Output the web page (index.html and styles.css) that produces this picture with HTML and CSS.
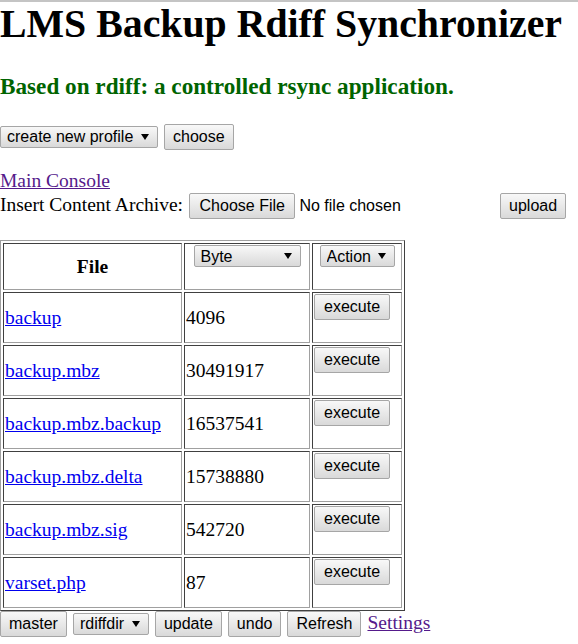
FILE: index.html
```html
<!DOCTYPE html>
<html lang="en">

<head>
    <meta charset="UTF-8">
    <meta name="viewport" content="width=device-width, initial-scale=1.0">
    <title>LMS Backup Rdiff Synchronizer</title>
    <link rel="stylesheet" href="styles.css">
</head>

<body>
    <h1>LMS Backup Rdiff Synchronizer</h1>
    <h3 class="tagline">Based on rdiff: a controlled rsync application.</h3>

    <form class="toolbar profile-bar">
        <span class="picker">
            <select class="select-profile" name="profile">
                <option>create new profile</option>
            </select>
        </span>
        <button type="button">choose</button>
    </form>

    <div class="console-link"><a href="#" class="seen">Main Console</a></div>

    <form class="toolbar upload-bar">
        <span>Insert Content Archive:</span>
        <input type="file" name="archive" class="archive-input">
        <button type="button">upload</button>
    </form>

    <table class="files">
        <tr>
            <th class="col-file">File</th>
            <th class="col-size">
                <form class="cell-form head-form">
                    <span class="picker">
                        <select class="select-unit" name="unit">
                            <option>Byte</option>
                        </select>
                    </span>
                </form>
            </th>
            <th class="col-action">
                <form class="cell-form head-form">
                    <span class="picker">
                        <select class="select-action" name="action">
                            <option>Action</option>
                        </select>
                    </span>
                </form>
            </th>
        </tr>
        <tr>
            <td><a href="#">backup</a></td>
            <td>4096</td>
            <td><form class="cell-form"><button type="button" class="run">execute</button></form></td>
        </tr>
        <tr>
            <td><a href="#">backup.mbz</a></td>
            <td>30491917</td>
            <td><form class="cell-form"><button type="button" class="run">execute</button></form></td>
        </tr>
        <tr>
            <td><a href="#">backup.mbz.backup</a></td>
            <td>16537541</td>
            <td><form class="cell-form"><button type="button" class="run">execute</button></form></td>
        </tr>
        <tr>
            <td><a href="#">backup.mbz.delta</a></td>
            <td>15738880</td>
            <td><form class="cell-form"><button type="button" class="run">execute</button></form></td>
        </tr>
        <tr>
            <td><a href="#">backup.mbz.sig</a></td>
            <td>542720</td>
            <td><form class="cell-form"><button type="button" class="run">execute</button></form></td>
        </tr>
        <tr>
            <td><a href="#">varset.php</a></td>
            <td>87</td>
            <td><form class="cell-form"><button type="button" class="run">execute</button></form></td>
        </tr>
    </table>

    <form class="toolbar bottom-bar">
        <button type="button">master</button>
        <span class="picker">
            <select class="select-dir" name="dir">
                <option>rdiffdir</option>
            </select>
        </span>
        <button type="button">update</button>
        <button type="button">undo</button>
        <button type="button">Refresh</button>
        <a href="#" class="seen">Settings</a>
    </form>
</body>

</html>
```

FILE: styles.css
```css
body {
    margin: 0;
    border-top: 2px solid #c4c4c4;
    font-family: "Liberation Serif", "Times New Roman", serif;
    font-size: 19.5px;
    line-height: 22px;
    color: #000;
    background: #fff;
}

a {
    color: #0000ee;
}

a.seen {
    color: #551a8b;
}

h1 {
    margin: 0;
    font-size: 39.8px;
    line-height: 44px;
}

.tagline {
    margin: 27px 0 0;
    font-size: 23.2px;
    line-height: 26px;
    color: #006400;
}

/* rows of controls */
.toolbar {
    display: flex;
    align-items: baseline;
    gap: 6px;
}

.profile-bar {
    margin-top: 25px;
}

.console-link {
    margin-top: 20px;
}

.upload-bar {
    margin-top: 1px;
}

button,
select,
.archive-input::file-selector-button {
    font-family: "Liberation Sans", Arial, sans-serif;
    font-size: 16px;
    color: #000;
    border: 1px solid #a6a6a6;
    border-radius: 2px;
    background: linear-gradient(#f8f8f8, #d9d9d9);
}

button,
.archive-input::file-selector-button {
    height: 26px;
    padding: 0 8px;
}

button.run {
    padding: 0 9px;
}

.archive-input {
    width: 305px;
    height: 26px;
    font-family: "Liberation Sans", Arial, sans-serif;
    font-size: 16px;
    color: #000;
}

.archive-input::file-selector-button {
    padding: 0 9.5px;
    margin-right: 4px;
}

/* selects with a small drawn arrow */
.picker {
    position: relative;
    display: inline-block;
}

.picker::after {
    content: "";
    position: absolute;
    right: 9px;
    top: 8px;
    border-left: 4px solid transparent;
    border-right: 4px solid transparent;
    border-top: 6px solid #000;
    pointer-events: none;
}

select {
    appearance: none;
    display: block;
    height: 22px;
    padding: 0 0 0 6px;
}

.select-profile {
    width: 158px;
}

.select-unit {
    width: 107px;
}

.select-action {
    width: 75px;
}

.select-dir {
    width: 76px;
}

/* file listing */
.files {
    margin-top: 21px;
    border: 1px solid;
    border-color: #a0a0a0 #404040 #404040 #a0a0a0;
    border-spacing: 2px;
}

.files th,
.files td {
    padding: 1px;
    border: 1px solid;
    border-color: #404040 #a0a0a0 #a0a0a0 #404040;
}

.col-file {
    width: 175px;
}

.col-size {
    width: 122px;
}

.col-action {
    width: 86px;
}

.cell-form {
    display: flex;
    align-items: flex-start;
    height: 47px;
    margin: 0;
}

.head-form {
    justify-content: center;
    height: 43px;
}

.bottom-bar {
    margin-top: 0;
}
```
